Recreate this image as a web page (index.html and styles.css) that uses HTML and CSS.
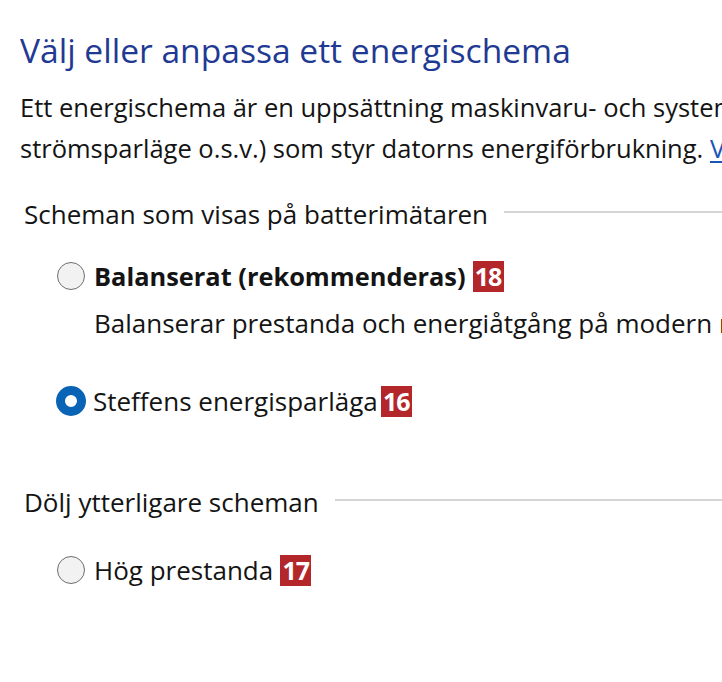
FILE: index.html
```html
<!DOCTYPE html>
<html lang="sv">
<head>
<meta charset="utf-8">
<link rel="stylesheet" href="styles.css">
</head>
<body>
<main class="page">
  <h1 class="title">Välj eller anpassa ett energischema</h1>
  <p class="intro">Ett energischema är en uppsättning maskinvaru- och systeminställningar (som skärmljusstyrka,<br>strömsparläge o.s.v.) som styr datorns energiförbrukning. <a href="#" class="link">Vad är ett energischema?</a></p>

  <section class="group">
    <div class="group-head"><span class="group-title">Scheman som visas på batterimätaren</span><span class="rule"></span></div>
    <div class="option">
      <span class="radio"></span>
      <span class="label bold">Balanserat (rekommenderas)</span><span class="badge">18</span>
    </div>
    <div class="desc">Balanserar prestanda och energiåtgång på modern maskinvara.</div>
    <div class="option opt-2">
      <span class="radio checked"></span>
      <span class="label">Steffens energisparläga</span><span class="badge tight">16</span>
    </div>
  </section>

  <section class="group group-2">
    <div class="group-head"><span class="group-title">Dölj ytterligare scheman</span><span class="rule"></span></div>
    <div class="option opt-3">
      <span class="radio"></span>
      <span class="label">Hög prestanda</span><span class="badge">17</span>
    </div>
  </section>
</main>
</body>
</html>
```

FILE: styles.css
```css
html, body {
  margin: 0;
  padding: 0;
  background: #ffffff;
  overflow: hidden;
}
body {
  width: 722px;
  height: 682px;
  font-family: "Open Sans", "Noto Sans", sans-serif;
  color: #141414;
}
.page {
  padding: 27px 0 0 20px;
  white-space: nowrap;
  overflow: hidden;
}
.title {
  margin: 0;
  font-weight: 400;
  font-size: 33.6px;
  line-height: 46px;
  color: #1f3a93;
}
.intro {
  margin: 14px 0 0 0;
  font-size: 25.5px;
  line-height: 41px;
}
.link {
  color: #1a56b8;
  text-decoration: underline;
  text-decoration-thickness: 2px;
  text-underline-offset: 3px;
}
.group {
  margin-top: 29px;
  padding-left: 4px;
}
.group-head {
  display: flex;
  align-items: center;
  gap: 16px;
  height: 32px;
}
.group-title {
  font-size: 26px;
}
.rule {
  flex: 1;
  height: 2px;
  background: #d4d4d4;
  margin-top: -4px;
}
.option {
  display: flex;
  align-items: center;
  height: 32px;
  margin-top: 30px;
  padding-left: 33px;
}
.opt-2 { margin-top: 46px; }
.opt-3 { margin-top: 36px; }
.radio {
  width: 28px;
  height: 28px;
  border: 1.5px solid #6e6e6e;
  border-radius: 50%;
  background: #f2f2f2;
  box-sizing: border-box;
  margin-right: 9px;
  flex: none;
}
.radio.checked {
  width: 30px;
  height: 30px;
  border: 9px solid #0a64b5;
  background: #ffffff;
  margin-left: -1px;
  margin-right: 7px;
}
.label {
  font-size: 26px;
}
.bold { font-weight: 700; font-size: 25.4px; }
.badge {
  display: inline-flex;
  align-items: center;
  justify-content: center;
  width: 31px;
  height: 31px;
  margin-left: 7px;
  background: #b3262a;
  color: #ffffff;
  font-weight: 700;
  font-size: 25px;
  letter-spacing: -1px;
}
.badge.tight { margin-left: 3px; }
.desc {
  font-size: 26px;
  padding-left: 70px;
  margin-top: 15px;
  line-height: 32px;
}
.group-2 { margin-top: 69px; }
```
